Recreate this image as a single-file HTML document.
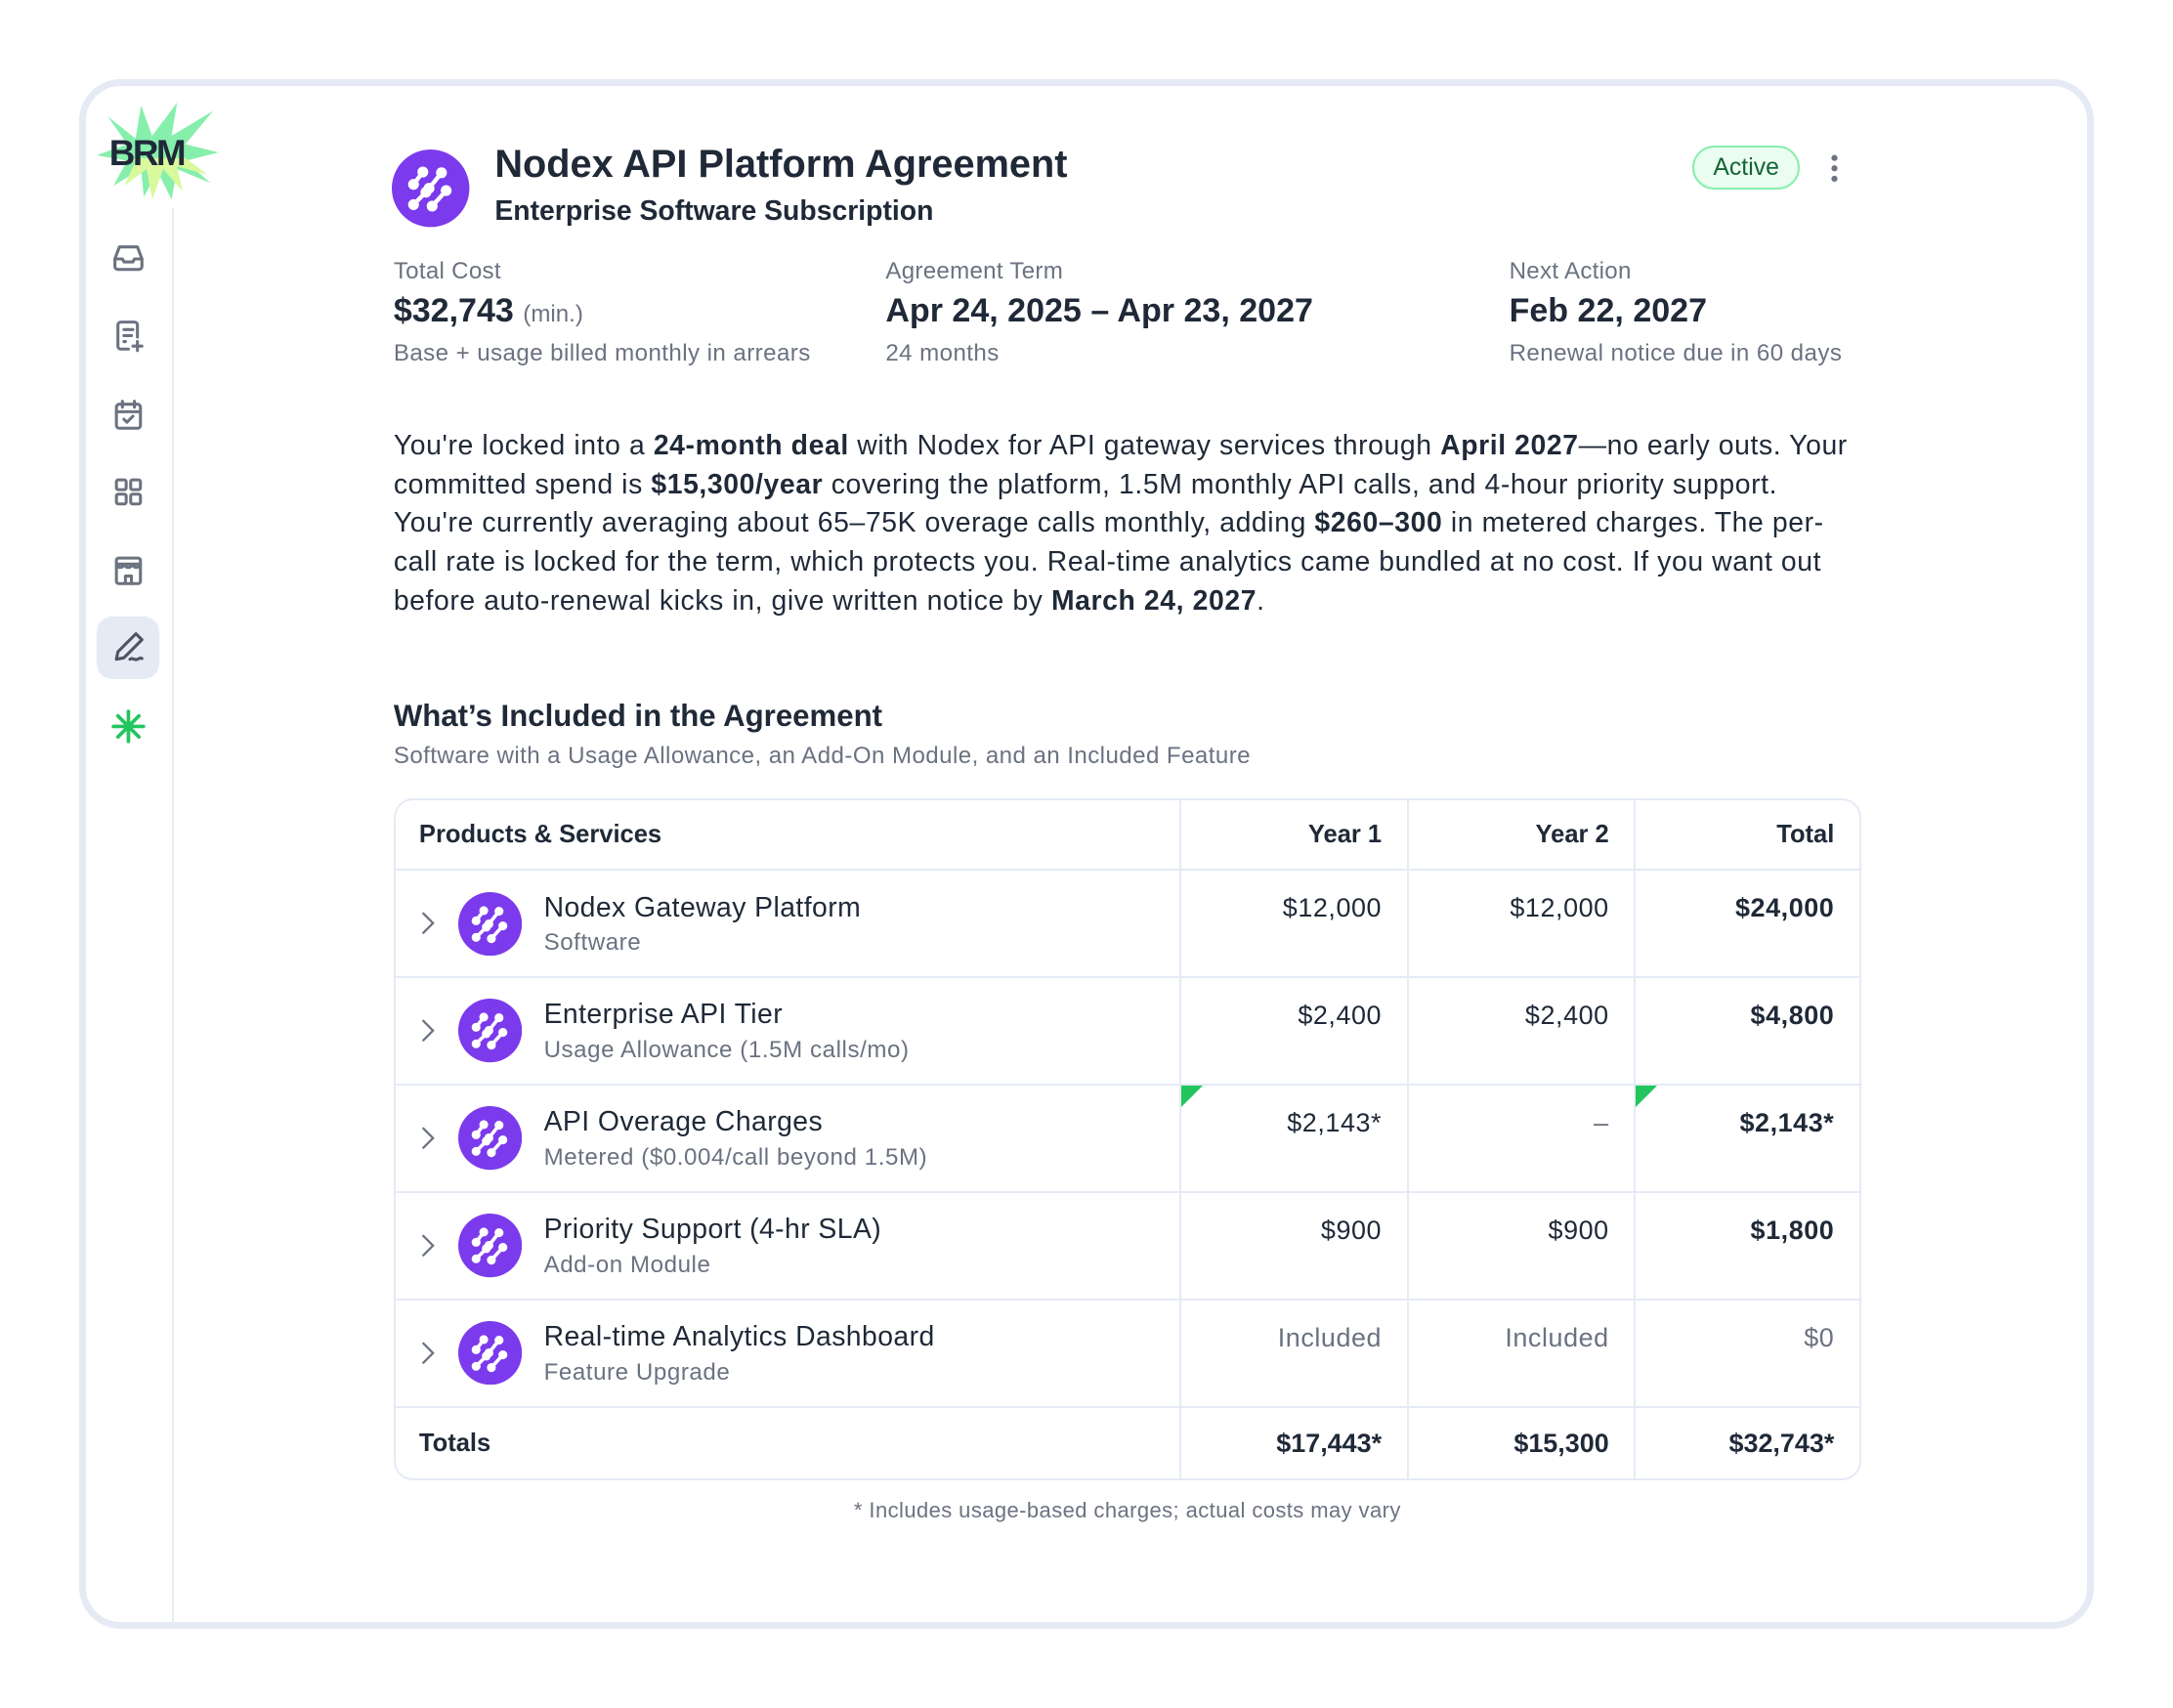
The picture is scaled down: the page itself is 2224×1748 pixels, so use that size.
<!DOCTYPE html>
<html><head><meta charset="utf-8">
<style>
*{box-sizing:border-box;margin:0;padding:0}
html,body{width:2224px;height:1748px;background:#fff;overflow:hidden}
#w{zoom:1.41837;width:1568px;height:1232px;position:relative;font-family:"Liberation Sans",sans-serif;color:#1f2937}
.card{position:absolute;left:57px;top:57px;width:1454px;height:1118px;border:5.5px solid #e5eaf5;border-radius:30px;background:#fff}
.sb{position:absolute;left:124px;top:150px;width:1.5px;height:1022px;background:#e8ecf4}
.a{position:absolute;white-space:nowrap}
.ic{position:absolute;left:80px;width:26px;height:26px}
.lbl{font-size:17px;color:#6b7280;letter-spacing:0.2px}
.val{font-size:24px;font-weight:bold;color:#1f2937}
.sub{font-size:17px;color:#6b7280;letter-spacing:0.3px}
.para{font-size:20px;line-height:28px;color:#1f2937;letter-spacing:0.42px}
table{position:absolute;left:284px;top:576px;width:1059px;border-collapse:separate;border-spacing:0;border:1.5px solid #e5eaf5;border-radius:14px;table-layout:fixed}
td,th{border-right:1.5px solid #e5eaf5;border-bottom:1.5px solid #e5eaf5;text-align:right;padding:0 18px;vertical-align:top;position:relative}
td:last-child,th:last-child{border-right:none}
tr:last-child td{border-bottom:none}
th{height:51px;vertical-align:middle;font-size:18px;font-weight:bold}
th:first-child{text-align:left;padding-left:17px}
tr.r td{height:77.5px;padding-top:16px;font-size:19px;letter-spacing:0.4px}
.nm{position:relative;text-align:left;padding-left:0 !important}
.nm .t{position:absolute;left:107px;top:15px;font-size:20px;white-space:nowrap;letter-spacing:0.3px}
.nm .s{position:absolute;left:107px;top:42px;font-size:17px;color:#6b7280;white-space:nowrap;letter-spacing:0.4px}
.nm svg.lg{position:absolute;left:45px;top:15px}
.nm svg.ch{position:absolute;left:17px;top:29px}
.g{color:#6b7280}
.b{font-weight:bold}
tr.tot td{height:51px;vertical-align:middle;font-size:19px;font-weight:bold;padding-top:0}
.tri{position:absolute;left:0;top:0;width:0;height:0;border-top:16px solid #22c55e;border-right:16px solid transparent}
</style></head><body><div id="w">
<div class="card"></div>
<div class="sb"></div>

<svg width="0" height="0" style="position:absolute"><defs>
<g id="nx"><circle cx="50" cy="50" r="50" fill="#7c3aed"/><g stroke="#fff" stroke-width="5.5" stroke-linecap="round" fill="#fff">
<line x1="28" y1="45" x2="40" y2="29"/><circle cx="28" cy="45" r="7" stroke="none"/><circle cx="40" cy="29" r="7" stroke="none"/>
<line x1="48" y1="50" x2="64" y2="30"/><circle cx="48" cy="50" r="7" stroke="none"/><circle cx="64" cy="30" r="7" stroke="none"/>
<line x1="28" y1="71" x2="44" y2="55"/><circle cx="28" cy="71" r="7" stroke="none"/><circle cx="44" cy="55" r="7" stroke="none"/>
<line x1="52" y1="73" x2="70" y2="53"/><circle cx="52" cy="73" r="7" stroke="none"/><circle cx="70" cy="53" r="7" stroke="none"/>
</g></g>
<path id="chv" d="M3 2l7 7-7 7" fill="none" stroke="#6b7280" stroke-width="1.6" stroke-linecap="round"/>
</defs></svg>

<!-- BRM logo -->
<svg class="a" style="left:70px;top:74px" width="88" height="72" viewBox="0 0 88 72">
<polygon points="8,10 28,26 32,2 40,24 58,0 54,24 84,6 64,30 88,36 64,42 82,58 58,48 54,70 44,50 34,68 32,48 12,60 22,42 0,38 22,30" fill="#86efac"/>
<polygon points="10,44 28,42 20,60 36,48 40,70 48,48 62,64 58,46 80,52 64,40 30,40" fill="#d9f99d"/>
<text x="9" y="45" font-family="Liberation Sans,sans-serif" font-weight="900" font-size="26" fill="#1f2937" letter-spacing="-1.8">BRM</text>
</svg>

<!-- sidebar icons -->
<svg class="ic" style="top:173px" viewBox="0 0 24 24" fill="none" stroke="#6b7280" stroke-width="2" stroke-linecap="round" stroke-linejoin="round"><path d="M3 13l3-8h12l3 8v5a2 2 0 0 1-2 2H5a2 2 0 0 1-2-2z"/><path d="M3 13h5l1 2h6l1-2h5"/></svg>
<svg class="ic" style="top:229px" viewBox="0 0 24 24" fill="none" stroke="#6b7280" stroke-width="2" stroke-linecap="round" stroke-linejoin="round"><path d="M12 21H7a2 2 0 0 1-2-2V5a2 2 0 0 1 2-2h9a2 2 0 0 1 2 2v8"/><path d="M9 8h6M9 12h5M9 16h1M18 16v6M15 19h6"/></svg>
<svg class="ic" style="top:286px" viewBox="0 0 24 24" fill="none" stroke="#6b7280" stroke-width="2" stroke-linecap="round" stroke-linejoin="round"><rect x="4" y="5" width="16" height="16" rx="2"/><path d="M8 3v4M16 3v4M4 10h16M9 15l2 2 4-4"/></svg>
<svg class="ic" style="top:342px" viewBox="0 0 24 24" fill="none" stroke="#6b7280" stroke-width="2" stroke-linejoin="round"><rect x="4" y="4" width="6.5" height="6.5" rx="1.2"/><rect x="13.5" y="4" width="6.5" height="6.5" rx="1.2"/><rect x="4" y="13.5" width="6.5" height="6.5" rx="1.2"/><rect x="13.5" y="13.5" width="6.5" height="6.5" rx="1.2"/></svg>
<svg class="ic" style="top:398px" viewBox="0 0 24 24" fill="none" stroke="#6b7280" stroke-width="2" stroke-linecap="round" stroke-linejoin="round"><rect x="4" y="4" width="16" height="17" rx="1.5"/><path d="M4 8h16M4 8c1 3 4 3 5.3 0c1 3 4 3 5.4 0c1 3 4 3 5.3 0M10 21v-5h4v5"/></svg>
<div class="a" style="left:70px;top:445px;width:45px;height:45px;border-radius:11px;background:#e5eaf5"></div>
<svg class="ic" style="top:454px" viewBox="0 0 24 24" fill="none" stroke="#4b5563" stroke-width="2" stroke-linecap="round" stroke-linejoin="round"><path d="M17 3l4 4L9 19l-5 1 1-5z"/><path d="M13 20c2-1.5 3 1 5 0s2-1 3-.5"/></svg>
<svg class="ic" style="top:511px" viewBox="0 0 24 24" fill="none" stroke="#22c55e" stroke-width="2.4" stroke-linecap="round"><path d="M12 2v20M2 12h20M5 5l14 14M19 5L5 19"/></svg>

<!-- header -->
<svg class="a" style="left:283px;top:108px" width="56" height="56" viewBox="0 0 100 100"><use href="#nx"/></svg>
<div class="a" style="left:357px;top:103px;font-size:28px;font-weight:bold">Nodex API Platform Agreement</div>
<div class="a" style="left:357px;top:141px;font-size:20px;font-weight:bold">Enterprise Software Subscription</div>
<div class="a" style="left:1221px;top:105px;width:78px;height:32px;border:1.5px solid #86efac;background:#eafdf0;border-radius:16px;color:#166534;font-size:17.5px;text-align:center;line-height:29px">Active</div>
<svg class="a" style="left:1318px;top:110px" width="12" height="24" viewBox="0 0 12 24"><circle cx="6" cy="4" r="2.2" fill="#6b7280"/><circle cx="6" cy="11.5" r="2.2" fill="#6b7280"/><circle cx="6" cy="19" r="2.2" fill="#6b7280"/></svg>

<div class="a lbl" style="left:284px;top:186px">Total Cost</div>
<div class="a val" style="left:284px;top:211px">$32,743 <span style="font-size:17px;font-weight:normal;color:#6b7280">(min.)</span></div>
<div class="a sub" style="left:284px;top:245px">Base + usage billed monthly in arrears</div>
<div class="a lbl" style="left:639px;top:186px">Agreement Term</div>
<div class="a val" style="left:639px;top:211px">Apr 24, 2025 – Apr 23, 2027</div>
<div class="a sub" style="left:639px;top:245px">24 months</div>
<div class="a lbl" style="left:1089px;top:186px">Next Action</div>
<div class="a val" style="left:1089px;top:211px">Feb 22, 2027</div>
<div class="a sub" style="left:1089px;top:245px">Renewal notice due in 60 days</div>

<div class="a para" style="left:284px;top:308px">You're locked into a <b>24-month deal</b> with Nodex for API gateway services through <b>April 2027</b>—no early outs. Your<br>committed spend is <b>$15,300/year</b> covering the platform, 1.5M monthly API calls, and 4-hour priority support.<br>You're currently averaging about 65–75K overage calls monthly, adding <b>$260–300</b> in metered charges. The per-<br>call rate is locked for the term, which protects you. Real-time analytics came bundled at no cost. If you want out<br>before auto-renewal kicks in, give written notice by <b>March 24, 2027</b>.</div>

<div class="a" style="left:284px;top:504px;font-size:22px;font-weight:bold">What’s Included in the Agreement</div>
<div class="a sub" style="left:284px;top:536px">Software with a Usage Allowance, an Add-On Module, and an Included Feature</div>

<table>
<colgroup><col style="width:567px"><col style="width:164px"><col style="width:164px"><col></colgroup>
<tr><th>Products &amp; Services</th><th>Year 1</th><th>Year 2</th><th>Total</th></tr>
<tr class="r"><td class="nm"><svg class="ch" width="12" height="18" viewBox="0 0 12 18"><use href="#chv"/></svg><svg class="lg" width="46" height="46" viewBox="0 0 100 100"><use href="#nx"/></svg><div class="t">Nodex Gateway Platform</div><div class="s">Software</div></td><td>$12,000</td><td>$12,000</td><td class="b">$24,000</td></tr>
<tr class="r"><td class="nm"><svg class="ch" width="12" height="18" viewBox="0 0 12 18"><use href="#chv"/></svg><svg class="lg" width="46" height="46" viewBox="0 0 100 100"><use href="#nx"/></svg><div class="t">Enterprise API Tier</div><div class="s">Usage Allowance (1.5M calls/mo)</div></td><td>$2,400</td><td>$2,400</td><td class="b">$4,800</td></tr>
<tr class="r"><td class="nm"><svg class="ch" width="12" height="18" viewBox="0 0 12 18"><use href="#chv"/></svg><svg class="lg" width="46" height="46" viewBox="0 0 100 100"><use href="#nx"/></svg><div class="t">API Overage Charges</div><div class="s">Metered ($0.004/call beyond 1.5M)</div></td><td><div class="tri"></div>$2,143*</td><td class="g">–</td><td class="b"><div class="tri"></div>$2,143*</td></tr>
<tr class="r"><td class="nm"><svg class="ch" width="12" height="18" viewBox="0 0 12 18"><use href="#chv"/></svg><svg class="lg" width="46" height="46" viewBox="0 0 100 100"><use href="#nx"/></svg><div class="t">Priority Support (4-hr SLA)</div><div class="s">Add-on Module</div></td><td>$900</td><td>$900</td><td class="b">$1,800</td></tr>
<tr class="r"><td class="nm"><svg class="ch" width="12" height="18" viewBox="0 0 12 18"><use href="#chv"/></svg><svg class="lg" width="46" height="46" viewBox="0 0 100 100"><use href="#nx"/></svg><div class="t">Real-time Analytics Dashboard</div><div class="s">Feature Upgrade</div></td><td class="g">Included</td><td class="g">Included</td><td class="g">$0</td></tr>
<tr class="tot"><td style="text-align:left;padding-left:17px;font-size:18px">Totals</td><td>$17,443*</td><td>$15,300</td><td>$32,743*</td></tr>
</table>

<div class="a" style="left:0;width:1627px;text-align:center;top:1081px;font-size:15.5px;color:#6b7280;letter-spacing:0.3px">* Includes usage-based charges; actual costs may vary</div>
</div></body></html>
